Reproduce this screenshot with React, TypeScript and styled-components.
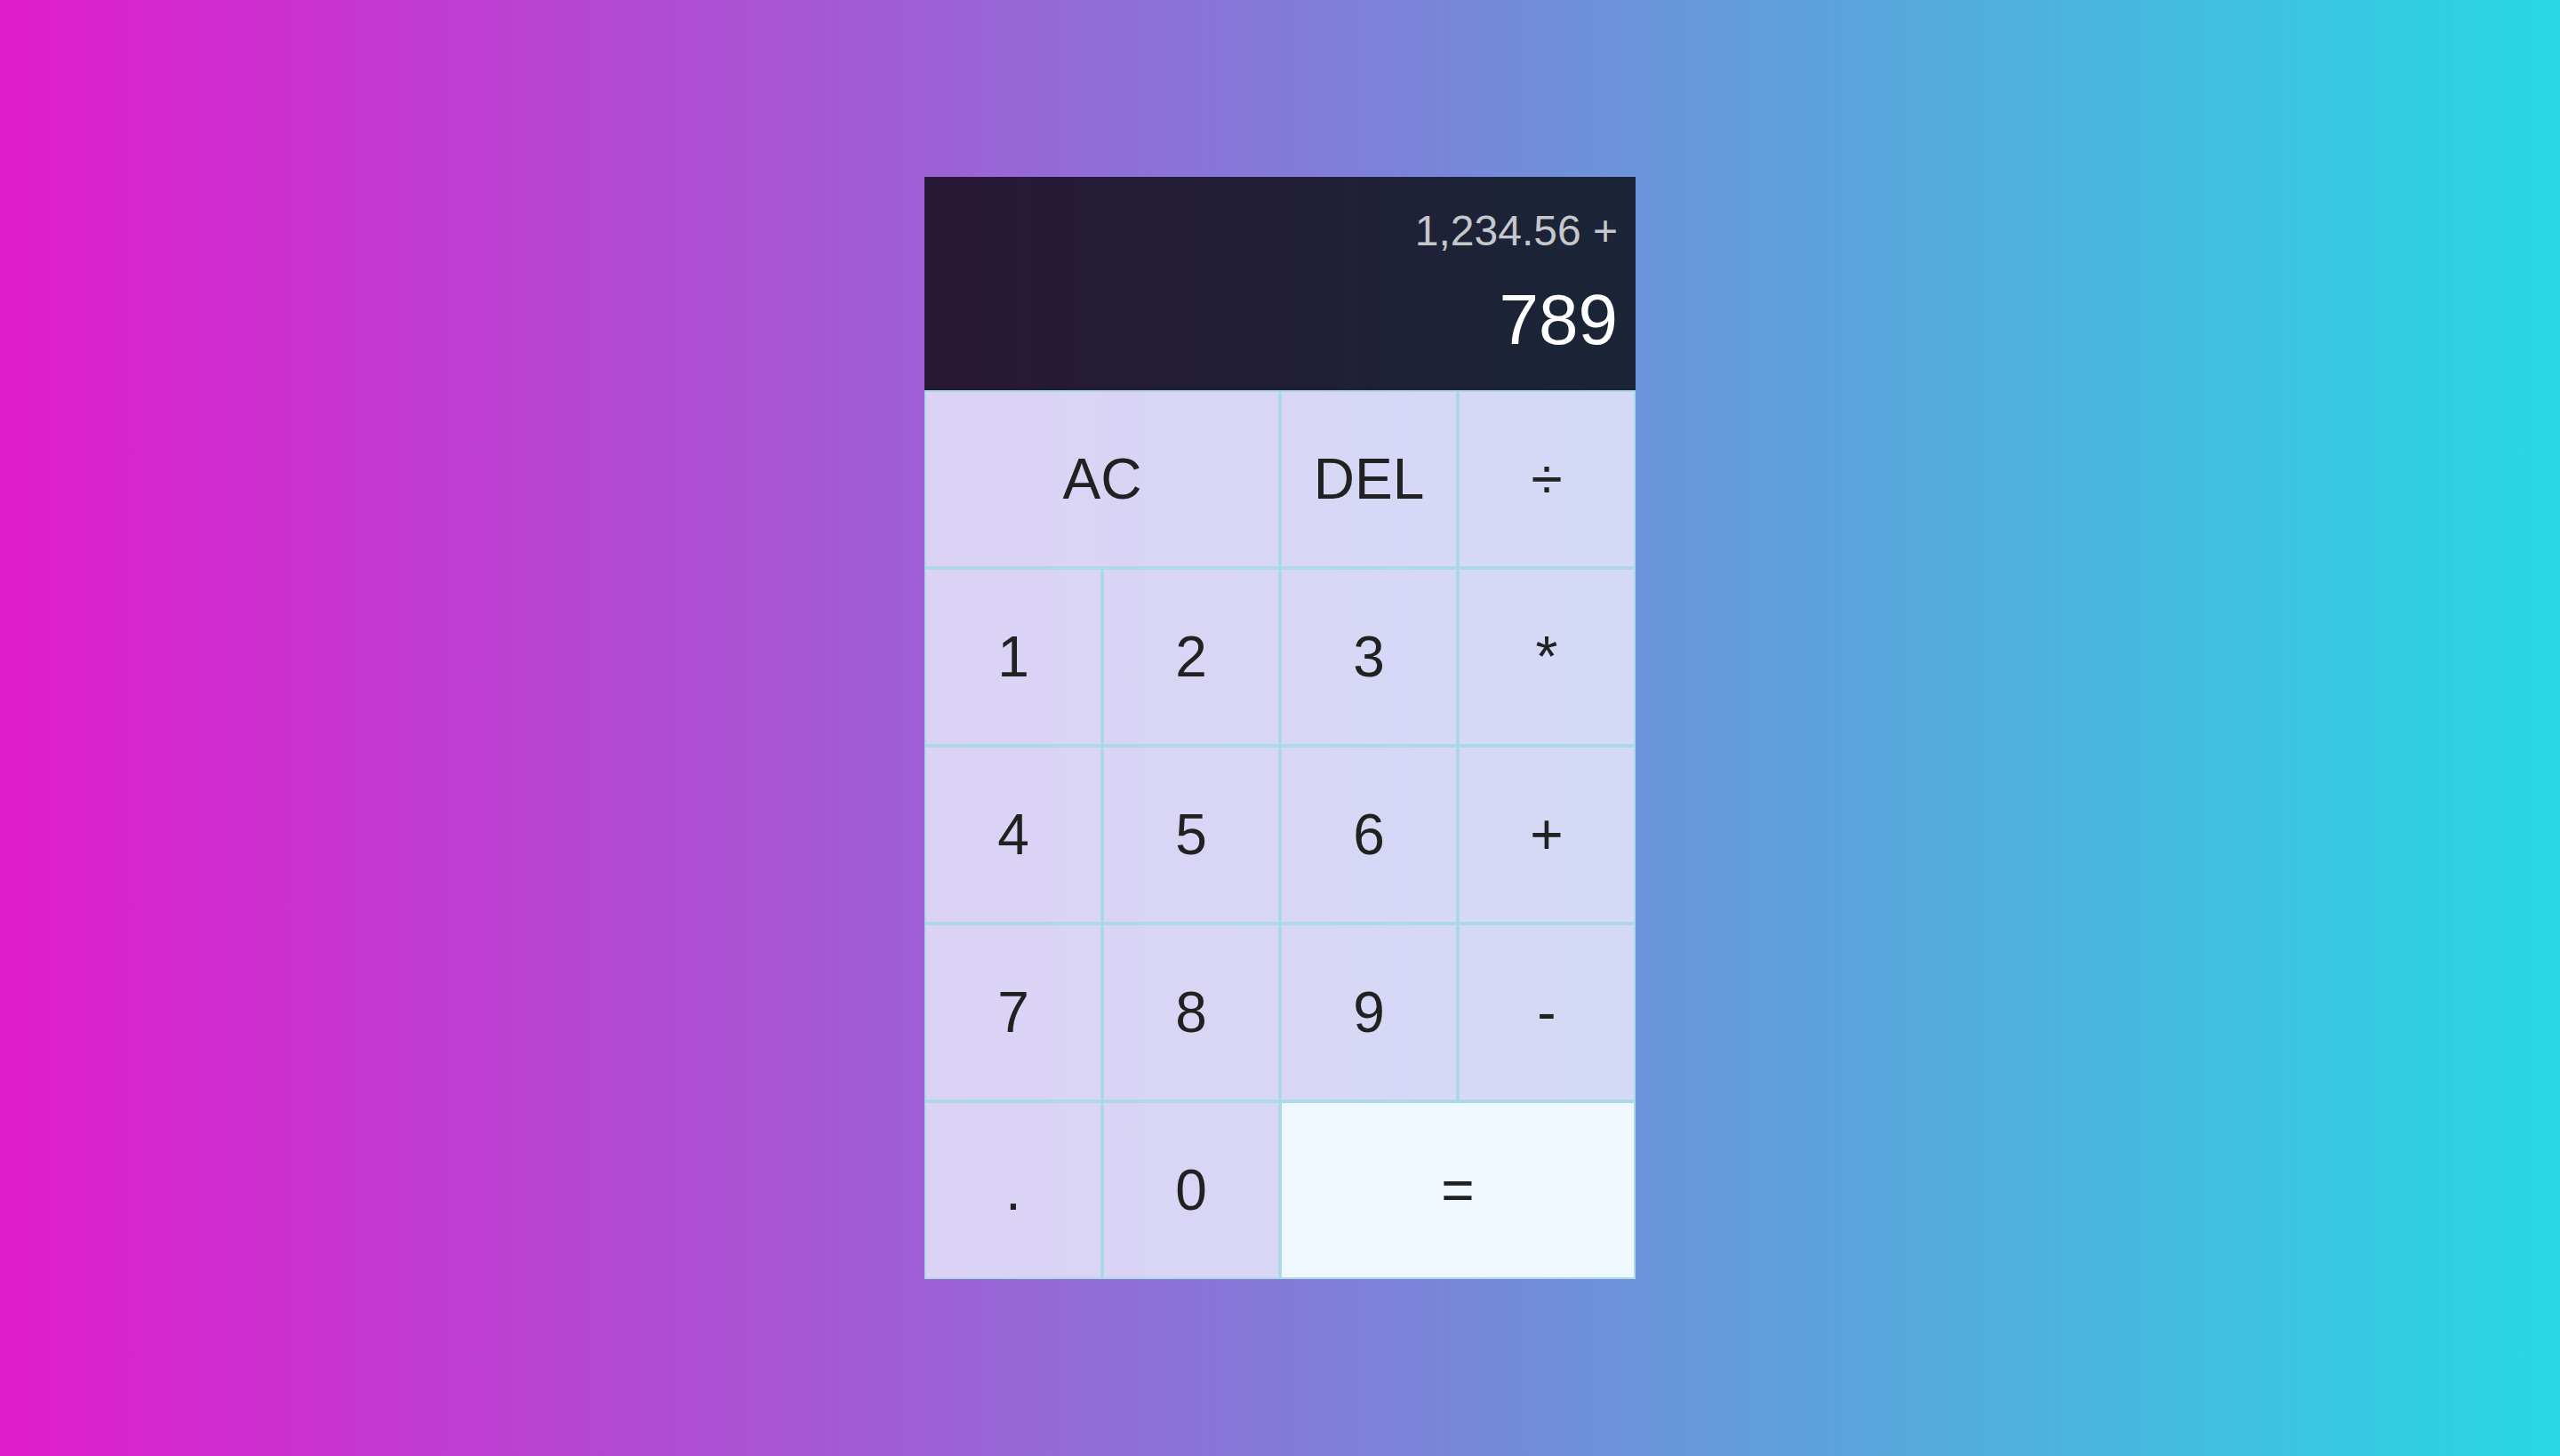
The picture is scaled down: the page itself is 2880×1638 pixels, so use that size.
import React from "react";
import styled, { createGlobalStyle } from "styled-components";

const GlobalStyle = createGlobalStyle`
  *, *::before, *::after {
    box-sizing: border-box;
    font-family: "Liberation Sans", Arial, Helvetica, sans-serif;
    font-weight: normal;
  }
  html, body {
    margin: 0;
    padding: 0;
  }
`;

const Page = styled.main`
  min-height: 100vh;
  display: grid;
  justify-content: center;
  align-content: center;
  background: linear-gradient(to right, #e01ccd, #28d8e3);
`;

const Calculator = styled.div`
  display: grid;
  grid-template-columns: repeat(4, 200px);
  grid-template-rows: minmax(240px, auto) repeat(5, 200px);
`;

const Output = styled.div`
  grid-column: 1 / -1;
  background-color: rgba(0, 0, 0, 0.75);
  display: flex;
  flex-direction: column;
  align-items: flex-end;
  justify-content: space-around;
  padding: 20px;
  word-break: break-all;
`;

const Previous = styled.div`
  color: rgba(255, 255, 255, 0.75);
  font-size: 48px;
`;

const Current = styled.div`
  color: #ffffff;
  font-size: 80px;
`;

const Key = styled.button<{ $span?: boolean; $accent?: boolean }>`
  grid-column: ${(p) => (p.$span ? "span 2" : "auto")};
  cursor: pointer;
  font-size: 64px;
  color: #212121;
  border: 2px solid #add8e6;
  outline: none;
  padding: 0;
  background-color: ${(p) =>
    p.$accent ? "#f0f8ff" : "rgba(230, 230, 250, 0.85)"};
`;

type KeyDef = { label: string; span?: boolean; accent?: boolean };

const keys: KeyDef[] = [
  { label: "AC", span: true },
  { label: "DEL" },
  { label: "÷" },
  { label: "1" },
  { label: "2" },
  { label: "3" },
  { label: "*" },
  { label: "4" },
  { label: "5" },
  { label: "6" },
  { label: "+" },
  { label: "7" },
  { label: "8" },
  { label: "9" },
  { label: "-" },
  { label: "." },
  { label: "0" },
  { label: "=", span: true, accent: true },
];

export default function App() {
  return (
    <>
      <GlobalStyle />
      <Page>
        <Calculator>
          <Output>
            <Previous>1,234.56 +</Previous>
            <Current>789</Current>
          </Output>
          {keys.map((k) => (
            <Key key={k.label} $span={k.span} $accent={k.accent}>
              {k.label}
            </Key>
          ))}
        </Calculator>
      </Page>
    </>
  );
}
